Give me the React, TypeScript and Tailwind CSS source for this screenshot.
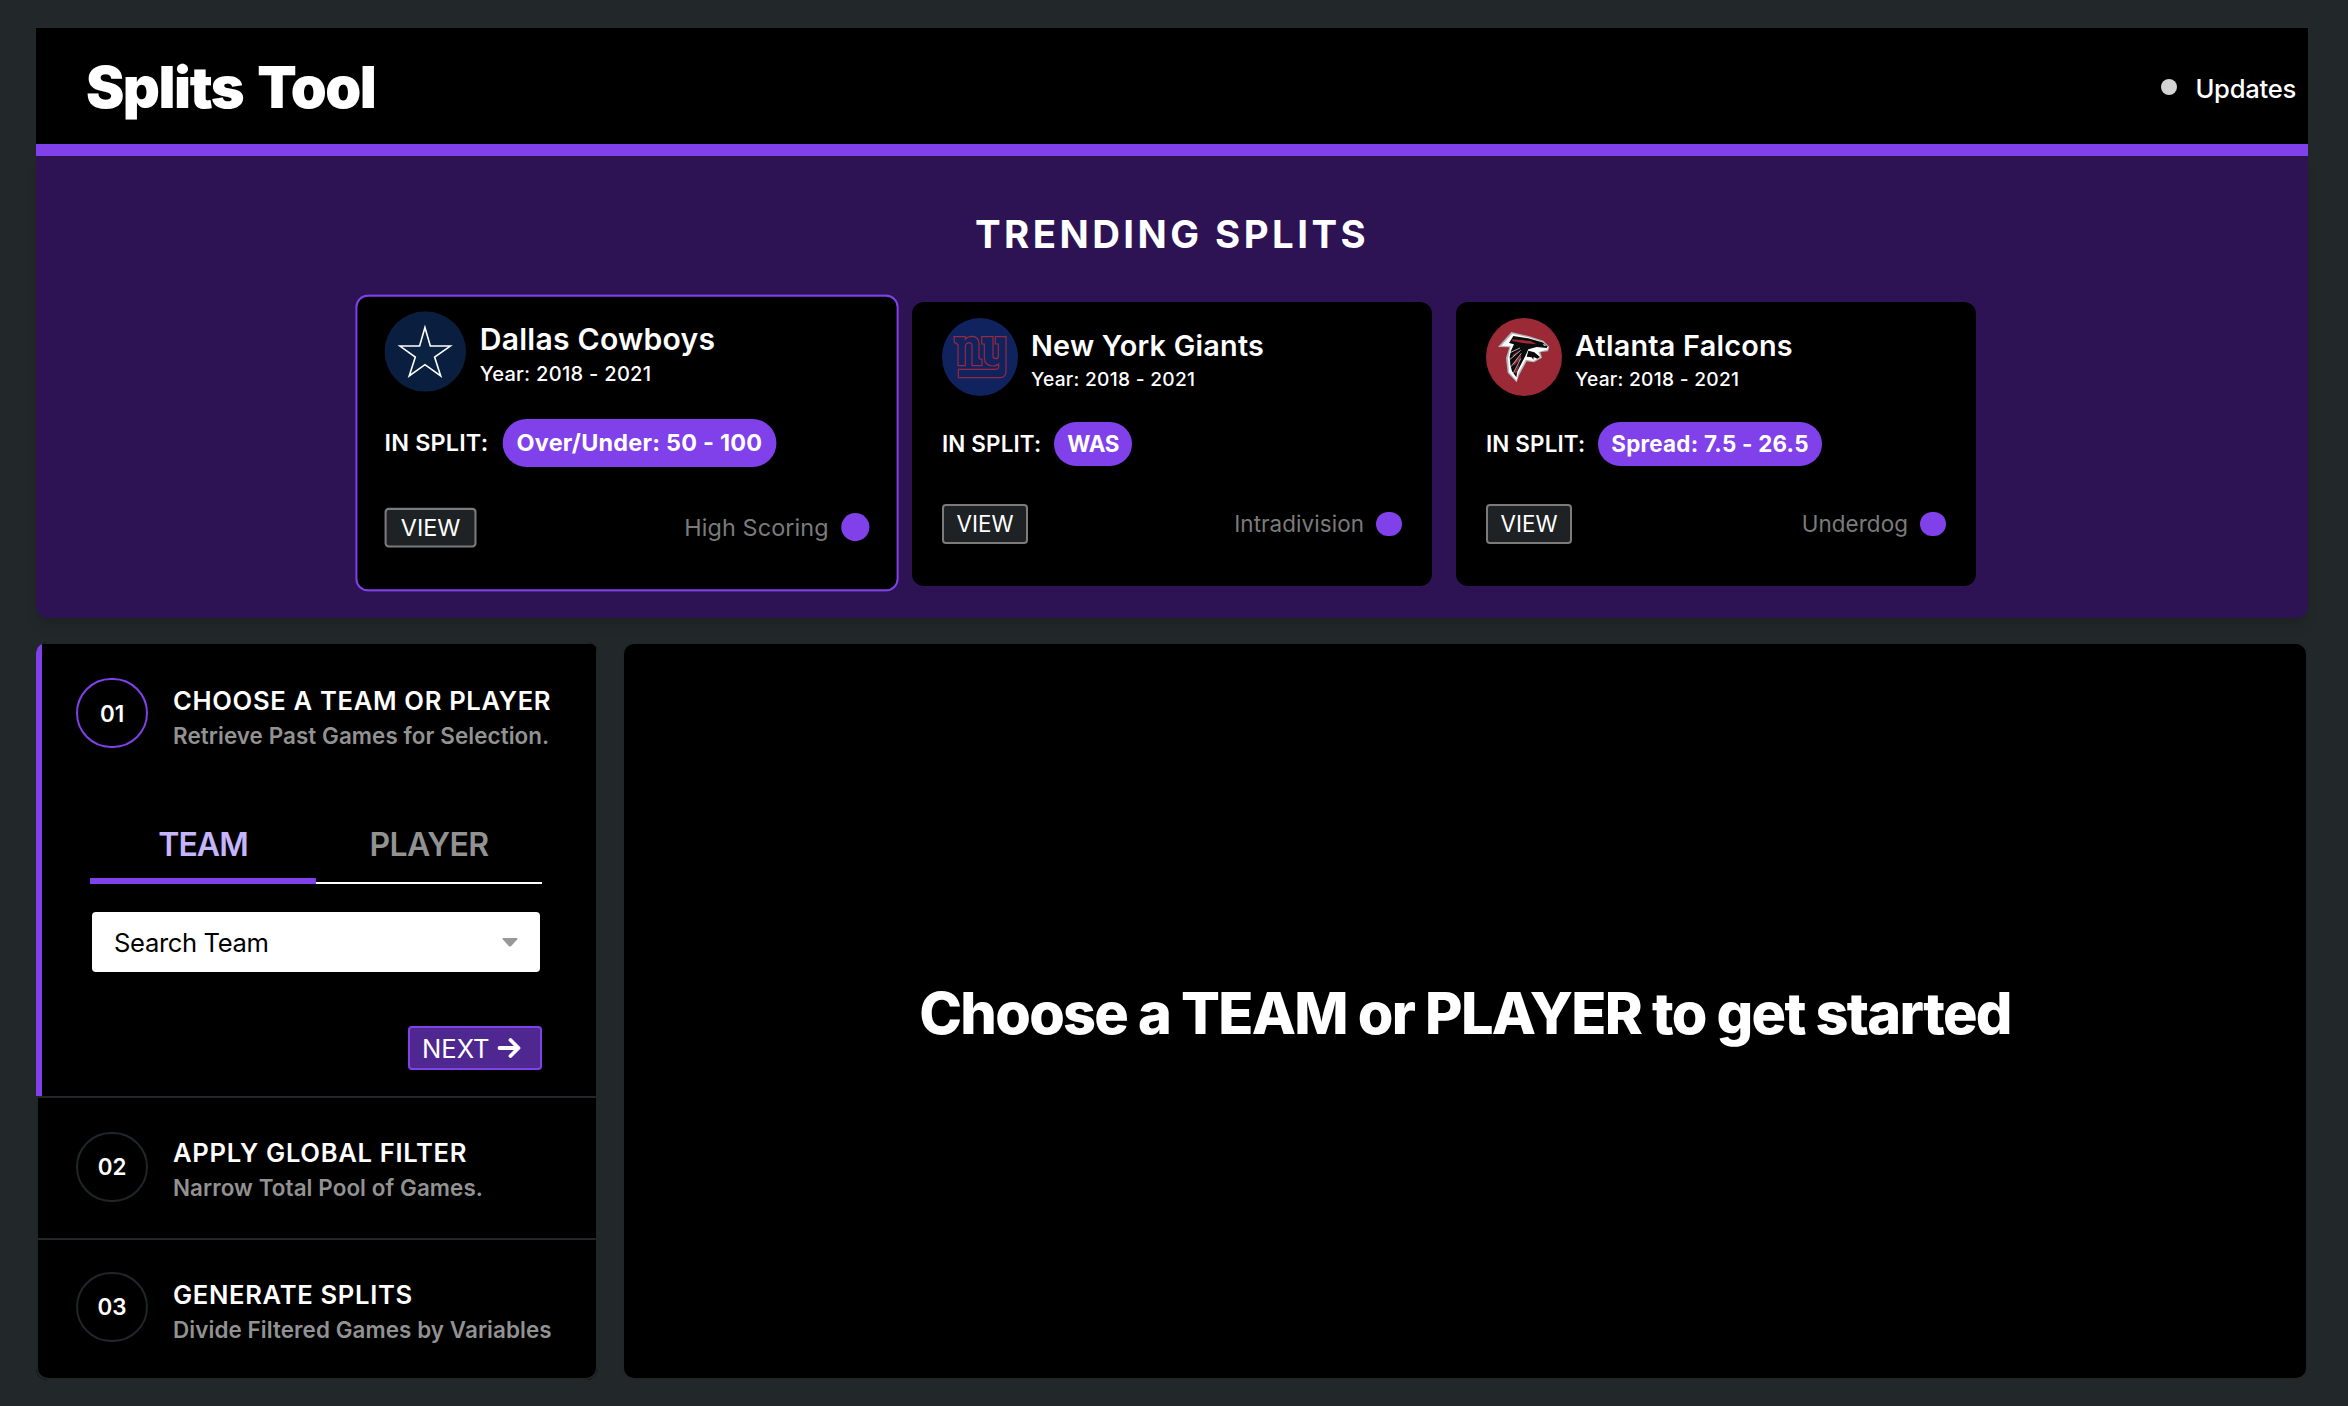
import React from "react";

const logoSize = "h-full w-full";

function CowboysLogo() {
  return (
    <svg viewBox="0 0 228 234" preserveAspectRatio="none" className={logoSize}>
      <ellipse cx="114" cy="117" rx="114" ry="117" fill="#0a1f40" />
      <path
        d="M113 47 L128 101 L184 101 L140 133 L157 188 L113 155 L69 188 L86 133 L43 101 L98 101 Z"
        fill="#0a2342"
        stroke="#ffffff"
        strokeWidth="4.5"
      />
    </svg>
  );
}

function GiantsLogo() {
  return (
    <svg viewBox="0 0 228 234" preserveAspectRatio="none" className={logoSize}>
      <ellipse cx="114" cy="117" rx="114" ry="117" fill="#10235f" />
      <g fill="none" stroke="#98293f" strokeWidth="3.6">
        <path d="M36 56 H70 V63 Q77 55 90 55 Q110 56 111 76 V118 Q111 124 120 124 V143 H90 V84 Q90 74 81 74 Q71 75 70 86 V124 V143 H48 V80 L37 73 Z" />
        <path d="M119 56 H153 V114 Q153 122 161 122 Q169 122 169 113 V78 H160 V56 H192 V160 Q192 179 174 179 H49 V154 H162 Q170 153 170 147 V138 Q164 144 152 144 Q128 143 127 120 V78 H119 Z" />
      </g>
    </svg>
  );
}

function FalconsLogo() {
  return (
    <svg viewBox="0 0 228 234" preserveAspectRatio="none" className={logoSize}>
      <ellipse cx="114" cy="117" rx="114" ry="117" fill="#9b2a36" />
      <path
        d="M76 42 L36 87 L70 88 L60 120 L65 164 L92 193 L98 174 L122 130 L144 133 L168 119 L163 102 L186 100 L190 86 L172 68 L128 54 Z"
        fill="#b4b6ba"
      />
      <path
        d="M79 47 L46 83 L74 85 L66 120 L69 162 L92 188 L96 168 L119 125 L142 129 L164 118 L157 102 L184 95 L186 86 L170 72 L126 58 Z"
        fill="#ffffff"
      />
      <path
        d="M82 54 L69 75 L84 79 L75 98 L71 116 L73 140 L78 160 L91 178 L94 160 L106 137 L118 114 L127 94 L152 87 L182 90 L185 84 L169 73 L126 61 Z"
        fill="#0b0b0b"
      />
      <path d="M127 98 L145 103 L162 117 L154 122 L143 117 L142 125 L137 118 L122 116 Z" fill="#0b0b0b" />
      <g fill="#9b2a36">
        <path d="M80 64 L134 69 L152 79 L110 75 L78 69 Z" />
        <path d="M99 97 L80 112 L82 118 Z" />
        <path d="M106 110 L82 136 L84 143 L104 122 Z" />
        <path d="M101 136 L86 162 L90 168 L98 148 Z" />
      </g>
      <g stroke="#ffffff" strokeWidth="2">
        <path d="M102 90 L72 104" />
        <path d="M104 97 L72 124" />
        <path d="M106 106 L75 146" />
        <path d="M104 122 L82 166" />
      </g>
      <path d="M171 78 L184 82 L174 83 Z" fill="#ffffff" />
    </svg>
  );
}

type Trend = { team: string; split: string; tag: string; logo: React.ReactNode; active?: boolean };

const trends: Trend[] = [
  { team: "Dallas Cowboys", split: "Over/Under: 50 - 100", tag: "High Scoring", logo: <CowboysLogo />, active: true },
  { team: "New York Giants", split: "WAS", tag: "Intradivision", logo: <GiantsLogo /> },
  { team: "Atlanta Falcons", split: "Spread: 7.5 - 26.5", tag: "Underdog", logo: <FalconsLogo /> },
];

function TrendCard({ team, split, tag, logo, active }: Trend) {
  return (
    <article
      className={
        "h-[284px] w-[520px] rounded-xl bg-black pt-4 " +
        (active
          ? "-translate-x-px -translate-y-px scale-[1.045] px-7 outline-2 -outline-offset-2 outline-[#8040ea]"
          : "px-[30px]")
      }
    >
      <div className="flex h-[78px] gap-[13px]">
        <div className={active ? "h-[77px] w-[78px] shrink-0" : "h-[78px] w-[76px] shrink-0"}>{logo}</div>
        <div className={active ? "pt-[7px]" : "pt-2"}>
          <h3 className="h-[39px] text-[28.8px] leading-10 font-semibold tracking-[0.008em] whitespace-nowrap">{team}</h3>
          <p className="text-[19.2px] leading-7 font-medium tracking-[0.014em]">Year: 2018 - 2021</p>
        </div>
      </div>
      <div className={active ? "mt-[25px] flex h-[46px] items-center gap-3.5" : "mt-[26px] flex h-11 items-center gap-[13px]"}>
        <span className="text-[22.4px] font-semibold tracking-[0.007em]">IN SPLIT:</span>
        <span
          className={
            "flex h-full items-center rounded-full bg-[#8040ea] px-[13px] text-[22.4px] font-bold whitespace-nowrap " +
            (split.length > 3 ? "tracking-[0.01em]" : "tracking-[-0.01em]")
          }
        >
          {split}
        </span>
      </div>
      <div className="mt-[37px] flex h-[42px] items-center justify-between">
        <button
          className={
            "rounded-[4px] border-2 border-[#7b7b7b] bg-[#1e2224] text-[22.4px] " +
            (active ? "h-[38px] w-[88px] leading-[34px]" : "h-10 w-[86px] leading-9")
          }
        >
          VIEW
        </button>
        <div className="flex items-center gap-3 text-[22.4px] tracking-[0.004em] text-[#7b7b7b]">
          {tag}
          <span className={active ? "size-[27px] rounded-full bg-[#8040ea]" : "h-6 w-[26px] rounded-full bg-[#8040ea]"} />
        </div>
      </div>
    </article>
  );
}

type StepProps = { n: string; title: string; sub: string; active?: boolean; circlePad: string; textPad: string };

function StepHeading({ n, title, sub, active, circlePad, textPad }: StepProps) {
  return (
    <div className="flex">
      <div className={circlePad}>
        <div
          className={
            "flex h-[70px] w-[72px] items-center justify-center rounded-full border-2 text-[22.4px] font-semibold " +
            (active ? "border-[#8040ea] pt-0.5" : "border-[#212629]")
          }
        >
          {n}
        </div>
      </div>
      <div className={"pl-[25px] " + textPad}>
        <h3 className="h-[35px] text-[25.6px] leading-[35px] font-semibold tracking-[0.026em] whitespace-nowrap">{title}</h3>
        <p className="h-[35px] text-[22.4px] leading-[35px] font-semibold tracking-[0.004em] whitespace-nowrap text-[#929292]">{sub}</p>
      </div>
    </div>
  );
}

export default function App() {
  return (
    <div className="h-[1406px] w-[2348px] overflow-hidden bg-[#22272a] pt-7 pr-10 pl-9 font-[Inter,sans-serif] text-white">
      <header className="flex h-32 items-center justify-between border-b-12 border-[#8040ea] bg-black pt-0.5 pr-3 pl-[50px]">
        <h1 className="text-[57.6px] leading-[72px] font-black tracking-[-0.026em] [word-spacing:4px]">Splits Tool</h1>
        <div className="flex items-center gap-[18px]">
          <span className="size-4 rounded-full bg-[#d4d4d4]" />
          <span className="pt-1 text-[25.6px] leading-9 font-medium tracking-[-0.01em]">Updates</span>
        </div>
      </header>

      <section className="h-[462px] rounded-b-xl bg-[#2e1354] pt-[58px] shadow-lg">
        <h2 className="text-center text-[38.4px] leading-10 font-bold tracking-[0.09em]">TRENDING SPLITS</h2>
        <div className="mt-12 flex justify-center gap-6">
          {trends.map((t) => (
            <TrendCard key={t.team} {...t} />
          ))}
        </div>
      </section>

      <div className="mt-6 flex h-[738px] gap-6">
        <aside className="flex w-[562px] flex-col overflow-hidden rounded-xl bg-black">
          <div className="h-[454px] border-t-2 border-r-2 border-l-6 border-t-[#212629] border-r-[#212629] border-l-[#8040ea] pl-[34px]">
            <StepHeading
              n="01"
              title="CHOOSE A TEAM OR PLAYER"
              sub="Retrieve Past Games for Selection."
              active
              circlePad="pt-[34px]"
              textPad="pt-[39px]"
            />
            <div className="mt-[67px] ml-3.5 flex w-[452px] text-[32px] leading-10 font-semibold">
              <div className="h-16 flex-1 border-b-6 border-[#8040ea] pt-[5px] text-center tracking-[-0.03em] text-[#c4b5fd]">TEAM</div>
              <div className="h-16 flex-1 border-b-2 border-white pt-[5px] text-center tracking-[-0.018em] text-[#929292]">PLAYER</div>
            </div>
            <div className="mt-7 ml-4 flex h-[60px] w-[448px] items-center justify-between rounded-[4px] bg-white px-[22px] text-[25.6px] tracking-[-0.014em] text-black">
              <span className="pt-0.5">Search Team</span>
              <svg viewBox="0 0 16 9" className="h-[9px] w-4">
                <path d="M1.2 0 H14.8 Q16 0.4 15.2 1.5 L9 8.2 Q8 9 7 8.2 L0.8 1.5 Q0 0.4 1.2 0 Z" fill="#999999" />
              </svg>
            </div>
            <button className="mt-[54px] ml-[332px] flex h-11 w-[134px] items-center gap-[7px] rounded-[4px] border-2 border-[#8040ea] bg-[#4e2790] pl-3 text-[25.6px] leading-9">
              <span className="pt-0.5">NEXT</span>
              <svg viewBox="0 0 24 22" className="h-[22px] w-6" fill="none" stroke="#ffffff" strokeWidth="3.8" strokeLinecap="round" strokeLinejoin="round">
                <path d="M2.5 11 H21 M13.5 3 L21.5 11 L13.5 19" />
              </svg>
            </button>
          </div>
          <div className="h-[142px] border-x-2 border-t-2 border-[#212629] pl-[38px]">
            <StepHeading n="02" title="APPLY GLOBAL FILTER" sub="Narrow Total Pool of Games." circlePad="pt-[34px]" textPad="pt-[37px]" />
          </div>
          <div className="h-[142px] rounded-b-xl border-2 border-[#212629] pl-[38px]">
            <StepHeading n="03" title="GENERATE SPLITS" sub="Divide Filtered Games by Variables" circlePad="pt-8" textPad="pt-[37px]" />
          </div>
        </aside>

        <main className="flex flex-1 items-center justify-center rounded-xl border-2 border-[#212629] bg-black pt-1">
          <h2 className="text-[57.6px] leading-[72px] font-extrabold tracking-[-0.03em]">Choose a TEAM or PLAYER to get started</h2>
        </main>
      </div>
    </div>
  );
}
